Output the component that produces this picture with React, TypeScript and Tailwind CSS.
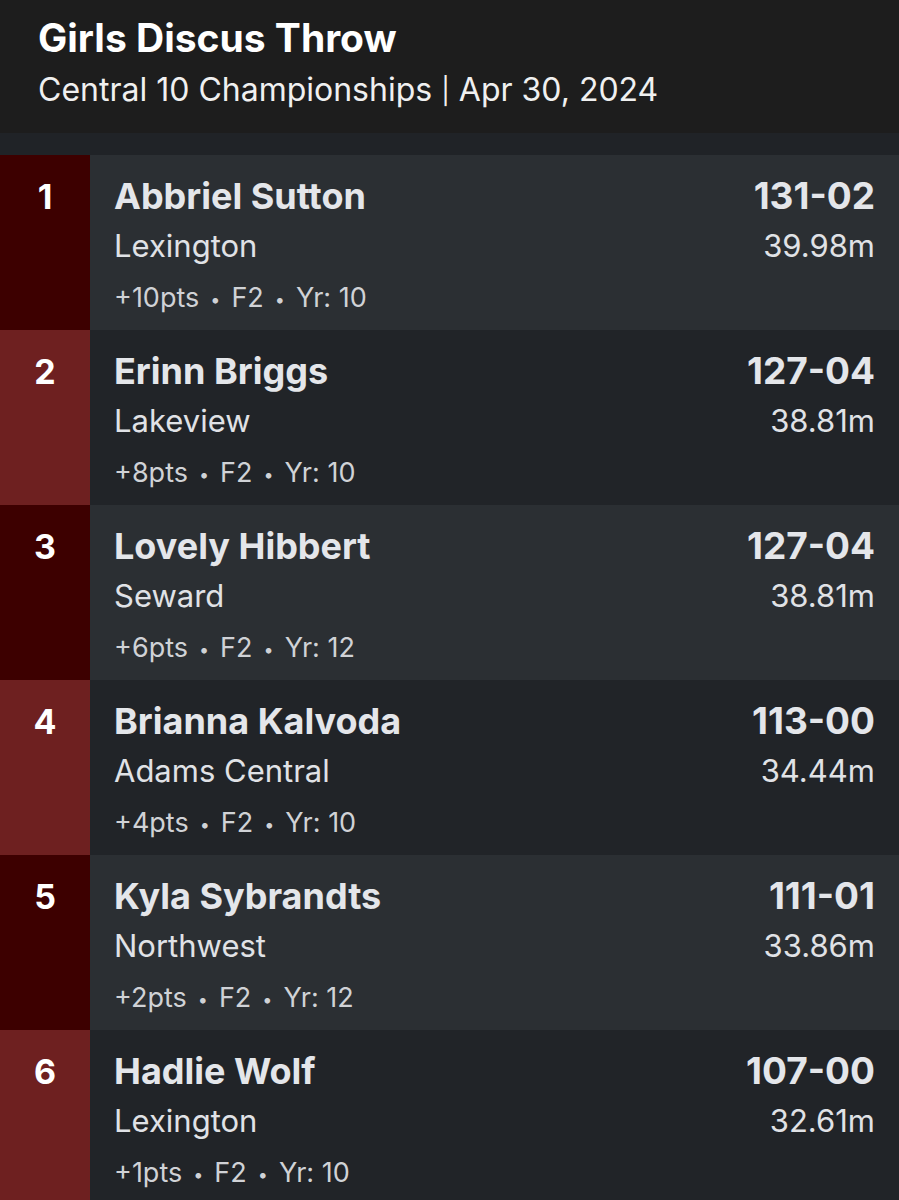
import React from 'react';

type Result = {
  place: number;
  name: string;
  team: string;
  mark: string;
  metric: string;
  pts: number;
  flight: string;
  year: number;
};

const results: Result[] = [
  { place: 1, name: 'Abbriel Sutton', team: 'Lexington', mark: '131-02', metric: '39.98m', pts: 10, flight: 'F2', year: 10 },
  { place: 2, name: 'Erinn Briggs', team: 'Lakeview', mark: '127-04', metric: '38.81m', pts: 8, flight: 'F2', year: 10 },
  { place: 3, name: 'Lovely Hibbert', team: 'Seward', mark: '127-04', metric: '38.81m', pts: 6, flight: 'F2', year: 12 },
  { place: 4, name: 'Brianna Kalvoda', team: 'Adams Central', mark: '113-00', metric: '34.44m', pts: 4, flight: 'F2', year: 10 },
  { place: 5, name: 'Kyla Sybrandts', team: 'Northwest', mark: '111-01', metric: '33.86m', pts: 2, flight: 'F2', year: 12 },
  { place: 6, name: 'Hadlie Wolf', team: 'Lexington', mark: '107-00', metric: '32.61m', pts: 1, flight: 'F2', year: 10 },
];

const Dot = () => <span className="mx-[11px] inline-block align-middle text-[18px] leading-none">•</span>;

const ResultRow: React.FC<{ r: Result }> = ({ r }) => {
  const odd = r.place % 2 === 1;
  return (
    <div className={`flex h-[175px] ${odd ? 'bg-[#2b2f33]' : 'bg-[#212428]'}`}>
      <div
        className={`w-[90px] shrink-0 pt-[22px] text-center text-[34px] font-bold leading-[40px] text-white ${
          odd ? 'bg-[#3d0000]' : 'bg-[#6e2020]'
        }`}
      >
        {r.place}
      </div>
      <div className="flex flex-1 justify-between pl-[24px] pr-[24px] pt-[19px]">
        <div>
          <div className="text-[36px] font-bold leading-[44px] text-[#e4e6ea]">{r.name}</div>
          <div className="mt-[8px] text-[31px] leading-[40px] text-[#e0e2e6]">{r.team}</div>
          <div className="mt-[15px] text-[27px] leading-[34px] text-[#d0d2d6]">
            +{r.pts}pts<Dot />{r.flight}<Dot />Yr: {r.year}
          </div>
        </div>
        <div className="text-right">
          <div className="text-[37px] font-bold leading-[44px] text-[#e4e6ea]">{r.mark}</div>
          <div className="mt-[8px] text-[31px] leading-[40px] text-[#e0e2e6]">{r.metric}</div>
        </div>
      </div>
    </div>
  );
};

export default function App() {
  return (
    <div className="min-h-screen w-[899px] bg-[#202327] font-['Inter','Roboto',sans-serif]">
      <header className="h-[133px] bg-[#1d1d1d] px-[38px] pt-[14px]">
        <h1 className="text-[39px] font-bold leading-[48px] text-white">Girls Discus Throw</h1>
        <p className="mt-[8px] text-[32px] leading-[40px] text-[#f0f0f0]">
          Central 10 Championships <span className="relative top-[-1px] text-[26px]">|</span> Apr 30, 2024
        </p>
      </header>
      <div className="pt-[22px]">
        {results.map((r) => (
          <ResultRow key={r.place} r={r} />
        ))}
      </div>
    </div>
  );
}
